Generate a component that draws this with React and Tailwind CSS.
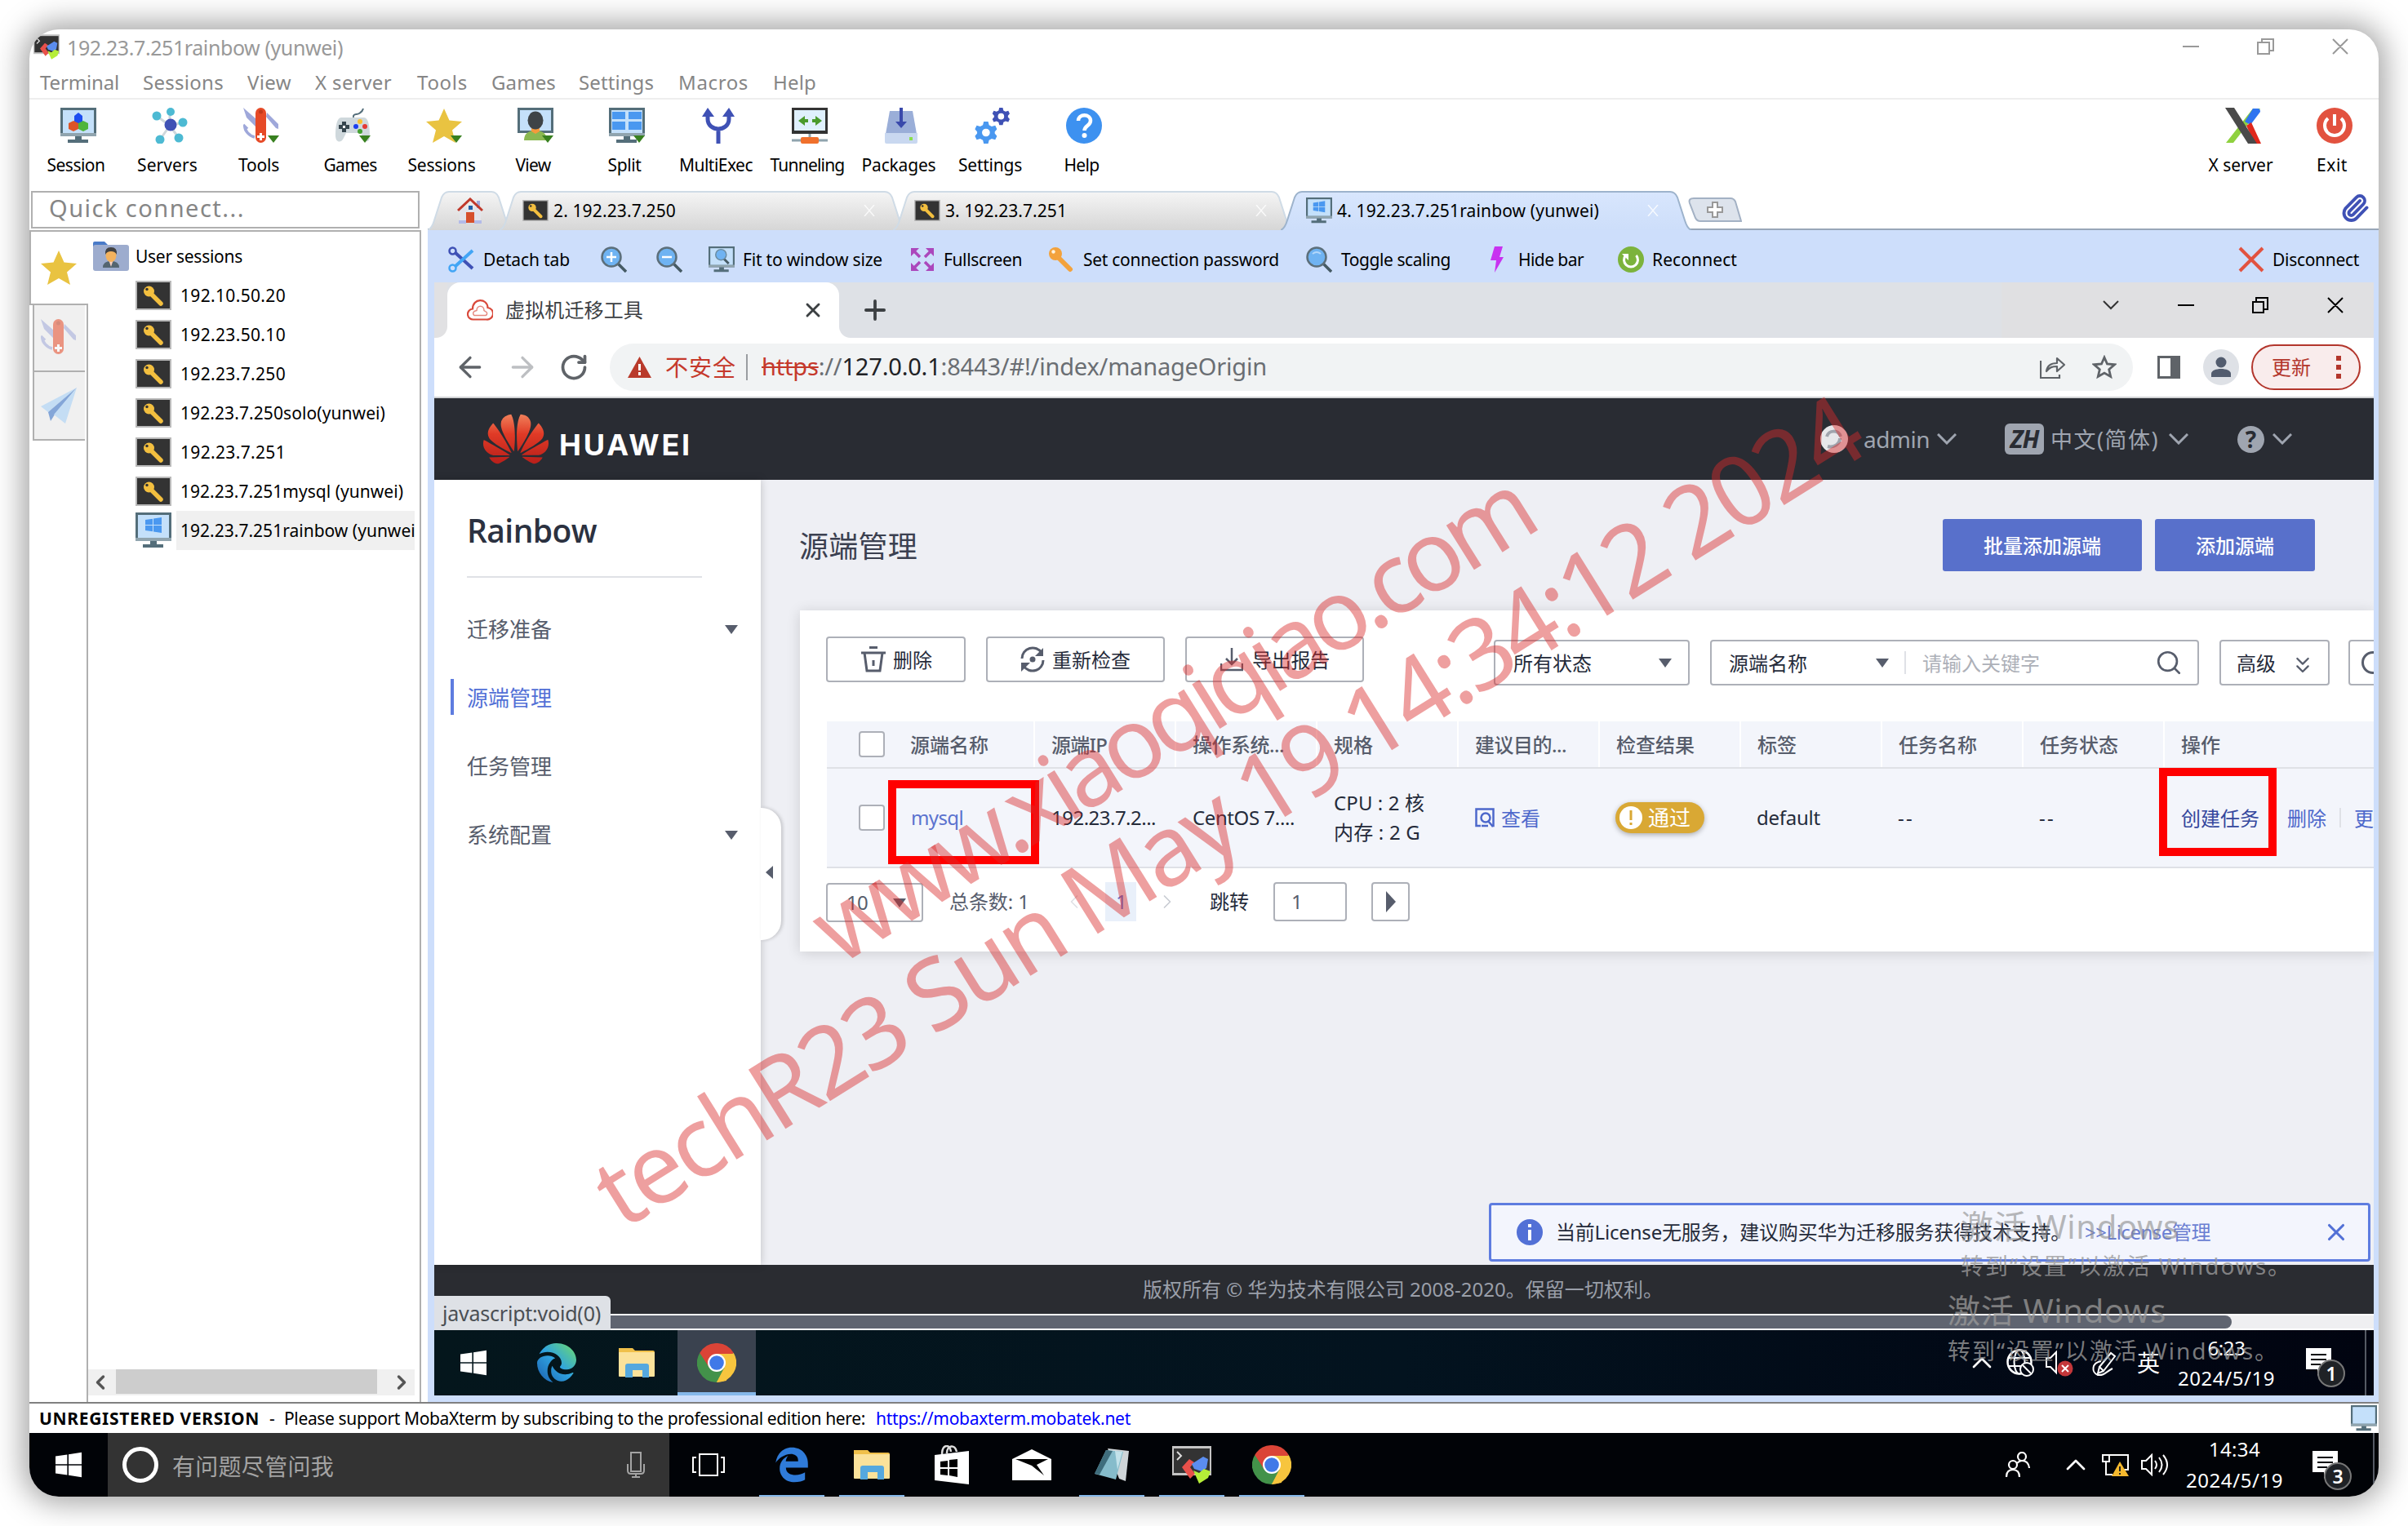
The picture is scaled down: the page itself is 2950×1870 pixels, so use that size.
import React, { useLayoutEffect, useRef } from "react";
import { ArrowLeft, ArrowRight, RotateCw, Star, Paperclip, ChevronUp, ChevronsDown, ChevronLeft, ChevronRight, Search, X, Plus } from "lucide-react";
import { FaEdge, FaEdgeLegacy } from "react-icons/fa6";
import { SiHuawei } from "react-icons/si";

/* Single line of text whose tracking is adjusted so it fills its own width. */
function T({ children, className = "" }) {
  const outer = useRef(null);
  const inner = useRef(null);
  useLayoutEffect(() => {
    const el = inner.current;
    el.style.letterSpacing = "0px";
    const diff = outer.current.clientWidth - el.getBoundingClientRect().width;
    el.style.letterSpacing = diff / el.textContent.length + "px";
  }, []);
  return (
    <span ref={outer} className={"block shrink-0 whitespace-nowrap leading-none " + className}>
      <span ref={inner} className="inline-block">{children}</span>
    </span>
  );
}

/* Rotated overlay line, tracked to a given length. */
function Stamp({ children, className = "" }) {
  const outer = useRef(null);
  const inner = useRef(null);
  useLayoutEffect(() => {
    const el = inner.current;
    el.style.letterSpacing = "0px";
    el.style.letterSpacing = (outer.current.offsetWidth - el.offsetWidth) / el.textContent.length + "px";
  }, []);
  return (
    <span ref={outer} className={"absolute block h-[120px] origin-bottom-left -rotate-32 whitespace-nowrap text-[120px] leading-none text-[#d92b2b]/45 pointer-events-none " + className}>
      <span ref={inner} className="inline-block">{children}</span>
    </span>
  );
}

const Svg = ({ className, box = "0 0 44 44", children }) => (
  <svg viewBox={box} className={"block shrink-0 " + className} fill="none">{children}</svg>
);
const GreenTri = () => <path d="M30 34h14l-7 9z" fill="#38801f" />;

/* ---------- drawings ---------- */
const Screen = ({ children }) => (
  <>
    <rect width="44" height="35" fill="#546e7a" />
    <rect y="31" width="44" height="4" fill="#90a4ae" />
    <rect x="3" y="3" width="38" height="28" fill="#c4e0fa" />
    <path d="M18 35h8v4h8v4H9v-4h9z" fill="#546e7a" />
    {children}
  </>
);
const WinPanes = ({ x = 12, y = 6, s = 1, color = "#4a98f0" }) => (
  <g transform={`translate(${x} ${y}) scale(${s})`} fill={color}>
    <path d="M0 3l9-1.3V9H0zM10 1.5L20 0v9H10zM0 10h9v7.3L0 16zM10 10h10v9l-10-1.5z" />
  </g>
);
const SessionIcon = () => (
  <Svg className="size-[44px]"><Screen>
    <path d="M17 10l5-4 5 4v8l-5 3-5-3z" fill="#1d4df0" />
    <path d="M10 19l6-3 6 3v7l-6 3-6-3z" fill="#dc5428" />
    <path d="M22 19l6-3 6 3v7l-6 3-6-3z" fill="#4fb53c" />
  </Screen></Svg>
);
const ServersIcon = () => (
  <Svg className="size-[44px]">
    <path d="M22 22L6 10M22 22V5M22 22l16-4M22 22L10 39M22 22l11 15" stroke="#cfd8dc" strokeWidth="3" />
    <circle cx="23" cy="21" r="7.5" fill="#3f51b5" />
    <g fill="#4dbad3"><circle cx="6" cy="10" r="5.5" /><circle cx="23" cy="5" r="5" /><circle cx="38" cy="18" r="5.5" /><circle cx="10" cy="39" r="5.5" /><circle cx="33" cy="37" r="5.5" /></g>
  </Svg>
);
const KnifeIcon = ({ className = "size-[44px]", tri = true }) => (
  <Svg className={className}>
    <path d="M0 0l16 14v10L4 12zM29 6l14 14v6l-3-1-12-14z" fill="#9fa8da" />
    <path d="M2 22c-1 6 6 13 12 14M0 21l5 5" stroke="#9fa8da" strokeWidth="3.5" />
    <rect x="15" width="13" height="43" rx="6.5" fill="#e64a27" />
    <circle cx="21.500" cy="5" r="2.500" fill="#c23a1c" />
    <path d="M20 31h3v3h3v3h-3v3h-3v-3h-3v-3h3z" fill="#fff" />
    {tri && <GreenTri />}
  </Svg>
);
const GamesIcon = () => (
  <Svg className="size-[44px]">
    <path d="M23 12c-1-5 4-3 7-5s4-2 5-6" stroke="#546e7a" strokeWidth="2" />
    <path d="M8 12h28c5 0 7 10 7 22 0 9-5 9-8 3l-3-6H14l-3 6c-3 7-10 6-10-3C1 22 3 12 8 12z" fill="#cfd8dc" />
    <path d="M9 17h5v4h4v5h-4v4H9v-4H5v-5h4z" fill="#37474f" /><rect x="10" y="22" width="3" height="3" fill="#fff" />
    <circle cx="31" cy="17" r="3" fill="#fbc02d" /><circle cx="26" cy="23" r="3" fill="#1d3ff0" /><circle cx="37" cy="23" r="3" fill="#e53935" /><circle cx="31" cy="29" r="3" fill="#43a030" />
    <GreenTri />
  </Svg>
);
const StarIcon = ({ className = "size-[44px]", tri }) => (
  <Svg className={className}>
    <path d="M22 1l6.500 14.500L44 17 32 27.500l4 15.500-14-8-14 8 4-15.500L0 17l15.500-1.500z" fill="#e9c341" />
    {tri && <GreenTri />}
  </Svg>
);
const ViewIcon = () => (
  <Svg className="size-[44px]"><rect width="44" height="31" fill="#546e7a" /><rect x="3" y="3" width="38" height="25" fill="#c4e0fa" />
    <path d="M8 40c0-9 6-12 14-12s14 3 14 12z" fill="#8bb851" /><path d="M17 24h10v5l-5 3-5-3z" fill="#f59a3c" /><ellipse cx="22" cy="15.500" rx="9.500" ry="11" fill="#3e4347" /><GreenTri />
  </Svg>
);
const SplitIcon = () => (
  <Svg className="size-[44px]"><Screen><path d="M4 5h16v9H4zM24 5h16v9H24zM4 17h16v10H4zM24 17h16v10H24z" fill="#4a98f0" /></Screen><GreenTri /></Svg>
);
const MultiIcon = () => (
  <Svg className="size-[44px]"><path d="M22 44V27M9 8v6c0 8 7 12 13 12s13-4 13-12V8" stroke="#3f51b5" strokeWidth="5" /><path d="M2 11L9 0l8 11zM27 11L35 0l7 11z" fill="#3f51b5" /></Svg>
);
const TunnelIcon = () => (
  <Svg className="size-[44px]"><rect width="44" height="32" fill="#333" /><rect x="3" y="3" width="38" height="25" fill="#dff0fd" /><path d="M8 16l8-6v4h4v4h-4v4zM37 16l-8-6v4h-4v4h4v4z" fill="#4a9a2c" /><path d="M22 32v8M0 40h44" stroke="#90a4ae" strokeWidth="3" /><rect x="11" y="36" width="22" height="8" rx="2" fill="#f0702c" /></Svg>
);
const PackIcon = () => (
  <Svg className="size-[44px]"><path d="M8 4h28l5 28H3z" fill="#9aaed8" /><path d="M2 31h40v11q0 2-2 2H4q-2 0-2-2z" fill="#c9d8f0" /><rect x="32" y="36" width="4" height="4" fill="#8ae04c" /><path d="M20 0h4v17h5l-7 8-7-8h5z" fill="#3949ab" /></Svg>
);
const gear = "M8.500 0h5l1 4 3 1.500 4-1 2 4-2.500 3v2l2.500 3-2 4-4-1-3 1.500-1 4h-5l-1-4-3-1.500-4 1-2-4 2.500-3v-2l-2.500-3 2-4 4 1 3-1.500zM11 8a4.500 4.500 0 100 9 4.500 4.500 0 000-9z";
const GearsIcon = () => (
  <Svg className="size-[44px]"><g transform="translate(2 17) scale(1.080)"><path fillRule="evenodd" d={gear} fill="#4a98f0" /></g><g transform="translate(23 0) scale(.85)"><path fillRule="evenodd" d={gear} fill="#3f51b5" /></g></Svg>
);
const HelpIcon = () => (
  <Svg className="size-[44px]"><circle cx="22" cy="22" r="22" fill="#3d91f0" /><path d="M15 16c0-9 15-9 15 0 0 6-7.500 6-7.500 12" stroke="#fff" strokeWidth="4.500" /><circle cx="22.500" cy="34" r="3" fill="#fff" /></Svg>
);
const XIcon = () => (
  <Svg className="size-[44px]"><path d="M34 1h9L10 43H1z" fill="#8fd13f" /><path d="M34 1h6q3 0 3 4L31 21l-7-4z" fill="#2f74f0" /><path d="M26 22l6-4 12 26h-8z" fill="#e0281c" /><path d="M0 0h11l28 44H28z" fill="#4a4a4a" /></Svg>
);
const PowerIcon = () => (
  <Svg className="size-[44px]"><circle cx="22" cy="22" r="22" fill="#e2523f" /><path d="M14 13a12 12 0 1016 0" stroke="#fff" strokeWidth="4" /><path d="M22 8v14" stroke="#fff" strokeWidth="4" /></Svg>
);
const KeyIcon = ({ className }) => (
  <Svg className={className} box="0 0 44 36"><rect width="44" height="36" fill="#b9b9b9" /><rect x="2" y="2" width="40" height="32" fill="#333" /><circle cx="16.500" cy="13" r="6.500" fill="#f3bf3f" /><path d="M19 16l12 12" stroke="#f3bf3f" strokeWidth="5.500" strokeLinecap="round" /><circle cx="14" cy="10.500" r="1.700" fill="#333" /></Svg>
);
const MonitorWin = ({ className }) => <Svg className={className}><Screen><WinPanes /></Screen></Svg>;
const MobaIcon = ({ className }) => (
  <Svg className={className} box="0 0 48 46"><rect width="48" height="36" fill="#c4c4c4" /><rect x="2" y="3" width="44" height="30" fill="#333" /><path d="M6 7l5 5-5 5" stroke="#ddd" strokeWidth="2" /><path d="M12 26l9-10 6 4-5 6 6 8-6 6z" fill="#e8504a" /><path d="M24 22l14-9 6 3-2 11-6 4-9-3z" fill="#5b8def" /><path d="M26 30l7 3 6-5 8 3-3 8-11 7z" fill="#b5ee38" /></Svg>
);
const ChromeIcon = () => (
  <Svg className="size-[48px]" box="0 0 48 48"><path d="M24 24L3.200 12a24 24 0 0141.600 0z" fill="#db4437" /><path d="M24 24h0L44.800 12A24 24 0 0124 48z" fill="#f7c53e" /><path d="M24 24L24 48A24 24 0 013.200 12z" fill="#43924a" /><path d="M24 13h21.300L33 30z" fill="#f7c53e" /><path d="M14.500 29.500L3.200 12l11 0L24 13z" fill="#db4437" /><path d="M14.500 29.500L3.200 12 10 24z" fill="#43924a" /><path d="M14 30l20 0L24 48z" fill="#43924a" /><path d="M33.500 29.500L24 48l12-2z" fill="#f7c53e" /><circle cx="24" cy="24" r="11" fill="#fff" /><circle cx="24" cy="24" r="8.800" fill="#4079e8" /></Svg>
);
const FolderIcon = ({ className }) => (
  <Svg className={className} box="0 0 44 36"><path d="M0 0h17l3 3h22q2 0 2 2v29H0z" fill="#f0c04a" /><path d="M0 5h44v29q0 1-1 1H1q-1 0-1-1z" fill="#fbe29a" /><path d="M8 36V22q0-3 3-3h23q3 0 3 3v14h-8v-9H17v9z" fill="#55a8de" /></Svg>
);
const WinLogo = () => <Svg className="size-[32px]" box="0 0 20 19"><WinPanes x={0} y={0} color="#fff" /></Svg>;
const Lens = ({ sign }) => (
  <Svg className="size-[32px]" box="0 0 32 32"><path d="M21 21l10 10" stroke="#455a64" strokeWidth="3.500" /><circle cx="13" cy="13" r="11.500" fill="#6fb3f2" stroke="#5c6f7b" strokeWidth="2.500" />{sign === "+" && <path d="M13 7v12M7 13h12" stroke="#fff" strokeWidth="2.500" />}{sign === "-" && <path d="M7 13h12" stroke="#fff" strokeWidth="2.500" />}{!sign && <path d="M8 9q5-4 10 0" stroke="#b4d8fa" strokeWidth="2" />}</Svg>
);
const Down = ({ className = "" }) => <Svg className={"w-[16px] h-[11px] " + className} box="0 0 16 11"><path d="M0 0h16L8 11z" fill="#575d6c" /></Svg>;
const WinBtns = ({ className, w }) => (
  <Svg className={"h-[20px] w-[204px] " + className} box="0 0 204 20">
    <path d={w ? "M0 10h20M92 5h14v14H92zM97 5V1h14v14h-5M184 1l18 18M202 1l-18 18" : "M0 10h20M92 6h13v13H92zM96 6V1h14v14h-5M184 1l18 18M202 1l-18 18"} stroke="currentColor" strokeWidth="2" />
  </Svg>
);
const Notif = ({ n, className = "" }) => (
  <div className={"relative h-[50px] w-[48px] shrink-0 " + className}>
    <Svg className="h-[34px] w-[31px]" box="0 0 31 34"><path d="M0 0h31v26H20l-6 8v-8H0z" fill="#fff" /><path d="M6 8h19M6 14h19M6 20h12" stroke="#05080f" strokeWidth="2" /></Svg>
    <span className="absolute left-[14px] top-[14px] flex size-[34px] items-center justify-center rounded-full border-2 border-[#777] bg-[#1f2226] text-[23px] font-semibold leading-none text-white">{n}</span>
  </div>
);

/* ---------- MobaXterm chrome ---------- */
const menus = [
  ["Terminal", "ml-[13px] w-[97px]"], ["Sessions", "ml-[29px] w-[99px]"], ["View", "ml-[29px] w-[54px]"], ["X server", "ml-[29px] w-[94px]"], ["Tools", "ml-[31px] w-[62px]"],
  ["Games", "ml-[29px] w-[79px]"], ["Settings", "ml-[28px] w-[92px]"], ["Macros", "ml-[30px] w-[86px]"], ["Help", "ml-[30px] w-[53px]"],
];
const tools = [
  ["Session", "w-[71px]", <SessionIcon />], ["Servers", "w-[74px]", <ServersIcon />], ["Tools", "w-[50px]", <KnifeIcon />], ["Games", "w-[65px]", <GamesIcon />],
  ["Sessions", "w-[83px]", <StarIcon tri />], ["View", "w-[43px]", <ViewIcon />], ["Split", "w-[41px]", <SplitIcon />], ["MultiExec", "w-[90px]", <MultiIcon />],
  ["Tunneling", "w-[91px]", <TunnelIcon />], ["Packages", "w-[91px]", <PackIcon />], ["Settings", "w-[78px]", <GearsIcon />], ["Help", "w-[43px]", <HelpIcon />],
];
const Tool = ({ label, w, icon }) => (
  <div className="flex w-[112px] shrink-0 flex-col items-center">
    {icon}
    <T className={"mr-[6px] mt-[16px] text-[21px] text-black " + w}>{label}</T>
  </div>
);

const TabShape = ({ w, active, children, className = "" }) => (
  <div className={"relative flex h-[48px] shrink-0 items-center " + className}>
    <svg className="absolute inset-0 h-full w-full" viewBox={`0 0 ${w} 48`} fill="none" preserveAspectRatio="none">
      <defs>
        <linearGradient id="tabg" x1="0" y1="0" x2="0" y2="1"><stop stopColor="#f5f5f5" /><stop offset="1" stopColor="#d6d6d6" /></linearGradient>
        <linearGradient id="taba" x1="0" y1="0" x2="0" y2="1"><stop stopColor="#d8e6fd" /><stop offset="1" stopColor="#cddefa" /></linearGradient>
      </defs>
      <path d={`M0 48Q5 46 8 36L17 8Q20 1 26 1H${w - 26}Q${w - 20} 1 ${w - 17} 8L${w - 8} 36Q${w - 5} 46 ${w} 48`} fill={active ? "url(#taba)" : "url(#tabg)"} stroke={active ? "#9db3cc" : "#cfdbe6"} strokeWidth="2" />
    </svg>
    <div className="relative flex items-center">{children}</div>
  </div>
);
const GhostX = ({ className }) => <Svg className={"size-[14px] " + className} box="0 0 14 14"><path d="M1 0l12 14M13 0L1 14" stroke="#fff" strokeOpacity=".8" strokeWidth="1.500" /></Svg>;

const sessions = [
  ["192.10.50.20", "w-[129px]"], ["192.23.50.10", "w-[129px]"], ["192.23.7.250", "w-[129px]"], ["192.23.7.250solo(yunwei)", "w-[251px]"], ["192.23.7.251", "w-[129px]"], ["192.23.7.251mysql (yunwei)", "w-[273px]"],
];

function Sidebar() {
  return (
    <div className="flex w-[488px] shrink-0 flex-col">
      <div className="ml-[2px] flex h-[46px] w-[476px] items-center border-2 border-[#b0b0b0]">
        <T className="ml-[20px] w-[240px] pb-[5px] text-[29px] text-[#868686]">Quick connect...</T>
      </div>
      <div className="mt-[2px] flex h-[1436px] w-[480px] border-r-2 border-t-2 border-[#b0b0b0]">
        <div className="flex w-[72px] shrink-0 flex-col">
          <div className="flex h-[90px] items-center border-b-2 border-l-2 border-[#b0b0b0] pl-[12px]"><StarIcon className="size-[44px]" /></div>
          <div className="flex flex-1 flex-col border-r-2 border-[#b0b0b0] pl-[4px]">
            <div className="flex h-[82px] w-[64px] items-center border-b-2 border-l-2 border-[#b0b0b0] bg-[#f0f0f0] pb-[2px] pl-[8px]"><KnifeIcon className="size-[44px] opacity-55" tri={false} /></div>
            <div className="flex h-[84px] w-[64px] items-center border-b-2 border-l-2 border-[#b0b0b0] bg-[#f0f0f0] pl-[8px]">
              <Svg className="size-[44px]"><path d="M44 0L0 23l9 7z" fill="#c4ddf4" /><path d="M44 0L9 30l3 11 5-8z" fill="#84a6d8" /><path d="M44 0L16 33l14 11z" fill="#c4ddf4" /></Svg>
            </div>
          </div>
        </div>
        <div className="flex w-[400px] flex-col">
          <div className="mt-[12px] flex h-[36px] items-center">
            <Svg className="ml-[6px] h-[36px] w-[44px]" box="0 0 44 36"><path d="M0 6V2q0-2 2-2h12l5 5v6H0z" fill="#4a7bc8" /><rect y="4" width="44" height="32" rx="3" fill="#9dacce" /><path d="M12 32q0-8 10-8t10 8z" fill="#546570" /><path d="M19 22h6l-3 9z" fill="#f6d0c0" /><ellipse cx="22" cy="17" rx="6.500" ry="8" fill="#f3b25e" /><path d="M15 16q-1-9 7-9t7 9q-2-4-7-4t-7 4z" fill="#424242" /></Svg>
            <T className="ml-[8px] w-[131px] text-[21px]">User sessions</T>
          </div>
          <div className="mt-[6px] flex flex-col">
            {sessions.map(([s, w]) => (
              <div key={s} className="flex h-[48px] items-center">
                <KeyIcon className="ml-[58px] h-[36px] w-[44px]" />
                <T className={"ml-[11px] text-[21px] " + w}>{s}</T>
              </div>
            ))}
            <div className="flex h-[48px] items-center">
              <MonitorWin className="ml-[58px] size-[44px]" />
              <div className="ml-[6px] flex h-[48px] w-[292px] items-center overflow-hidden bg-[#f0f0f0]"><T className="ml-[5px] w-[294px] text-[21px]">192.23.7.251rainbow (yunwei)</T></div>
            </div>
          </div>
          <div className="mt-auto mb-[8px] flex h-[32px] w-[400px] items-center bg-[#f0f0f0] text-[#555]">
            <ChevronLeft className="ml-[1px] size-[28px]" strokeWidth={3} />
            <div className="ml-[5px] h-[30px] w-[320px] self-start bg-[#cdcdcd]" />
            <ChevronRight className="ml-[16px] size-[28px]" strokeWidth={3} />
          </div>
        </div>
      </div>
    </div>
  );
}

/* ---------- remote page ---------- */
const heads = [
  ["源端IP", "w-[68px]"], ["操作系统...", "w-[112px]"], ["规格", "w-[48px]"], ["建议目的...", "w-[112px]"], ["检查结果", "w-[96px]"], ["标签", "w-[48px]"], ["任务名称", "w-[96px]"], ["任务状态", "w-[96px]"],
];
const Btn = ({ icon, label, className, w }) => (
  <div className={"flex h-[56px] shrink-0 items-center rounded-[4px] border-2 border-[#adb0b8] bg-white text-[#252b3a] " + className}>
    {icon}<T className={"pt-[2px] text-[24px] " + w}>{label}</T>
  </div>
);
const Check = ({ className = "" }) => <div className={"size-[32px] shrink-0 rounded-[4px] border-2 border-[#adb0b8] bg-white " + className} />;
const navs = [["迁移准备", 1], ["源端管理", 0, 1], ["任务管理", 0], ["系统配置", 1]];

function Card() {
  return (
    <div className="ml-[48px] mt-[48px] flex h-[418px] w-[1928px] flex-col overflow-hidden bg-white shadow-[0_2px_16px_rgba(0,0,0,0.14)]">
      <div className="ml-[32px] mt-[32px] flex h-[60px] items-start">
        <Btn className="w-[171px]" w="ml-[8px] w-[48px]" label="删除" icon={<Svg className="ml-[40px] h-[32px] w-[32px]" box="0 0 32 32"><path d="M11 1.500h10M1 8h30M5 8l3 22h16l3-22" stroke="#575d6c" strokeWidth="3" /><path d="M16 17v7" stroke="#575d6c" strokeWidth="3" /></Svg>} />
        <Btn className="ml-[25px] w-[219px]" w="ml-[8px] w-[96px]" label="重新检查" icon={<Svg className="ml-[39px] h-[32px] w-[32px]" box="0 0 32 32"><path d="M3 15A13 13 0 0127 8M29 17A13 13 0 015 24" stroke="#575d6c" strokeWidth="3" /><path d="M29 2v10H19zM2 31V20h11z" fill="#575d6c" /><circle cx="16" cy="16" r="3.500" fill="#575d6c" /></Svg>} />
        <Btn className="ml-[25px] w-[219px]" w="ml-[11px] w-[95px]" label="导出报告" icon={<Svg className="ml-[41px] h-[30px] w-[28px]" box="0 0 28 30"><path d="M14 1v20M7 14l7 7 7-7M1 20v8h26v-8" stroke="#575d6c" strokeWidth="2.500" /></Svg>} />
        <div className="ml-[159px] mt-[4px] flex h-[56px] w-[240px] shrink-0 items-center rounded-[4px] border-2 border-[#adb0b8] text-[#252b3a]"><T className="ml-[22px] w-[96px] pt-[2px] text-[24px]">所有状态</T><Down className="ml-[82px]" /></div>
        <div className="ml-[25px] mt-[4px] flex h-[56px] w-[599px] shrink-0 items-center rounded-[4px] border-2 border-[#adb0b8] text-[#252b3a]">
          <T className="ml-[21px] w-[96px] pt-[2px] text-[24px]">源端名称</T><Down className="ml-[84px]" />
          <div className="ml-[19px] h-[28px] w-[2px] bg-[#dfe1e6]" /><T className="ml-[20px] w-[144px] pt-[2px] text-[24px] text-[#adb0b8]">请输入关键字</T>
          <Search className="ml-[141px] size-[34px] shrink-0 text-[#575d6c]" strokeWidth={1.9} />
        </div>
        <div className="ml-[25px] mt-[4px] flex h-[56px] w-[135px] shrink-0 items-center rounded-[4px] border-2 border-[#adb0b8] text-[#252b3a]"><T className="ml-[19px] w-[48px] pt-[2px] text-[24px]">高级</T><ChevronsDown className="ml-[17px] mt-[6px] size-[32px] text-[#575d6c]" strokeWidth={1.7} /></div>
        <div className="ml-[23px] mt-[4px] flex h-[56px] w-[60px] shrink-0 items-center rounded-[4px] border-2 border-[#adb0b8]"><div className="ml-[14px] size-[28px] rounded-full border-[3px] border-[#575d6c]" /></div>
      </div>
      <div className="ml-[33px] mt-[44px] flex h-[58px] border-b-2 border-[#dfe1e6] bg-[#f3f5fb] text-[24px] font-medium text-[#575d6c]">
        <div className="flex w-[255px] shrink-0 items-center border-r-2 border-white"><Check className="ml-[39px]" /><T className="ml-[31px] w-[96px] pt-[2px]">源端名称</T></div>
        {heads.map(([h, w]) => <div key={h} className="flex w-[173px] shrink-0 items-center border-r-2 border-white"><T className={"ml-[20px] pt-[2px] " + w}>{h}</T></div>)}
        <div className="flex items-center"><T className="ml-[20px] w-[48px] pt-[2px]">操作</T></div>
      </div>
      <div className="ml-[33px] flex h-[122px] items-center border-b-2 border-[#dfe1e6] bg-[#f3f5fb] text-[24px] text-[#252b3a]">
        <div className="flex w-[275px] shrink-0 items-center"><Check className="ml-[39px]" /><T className="ml-[32px] w-[64px] text-[#5b73cf]">mysql</T></div>
        <div className="w-[173px] shrink-0"><T className="w-[128px]">192.23.7.2...</T></div>
        <div className="w-[173px] shrink-0"><T className="w-[125px]">CentOS 7....</T></div>
        <div className="flex w-[173px] shrink-0 flex-col gap-[12px]"><T className="w-[111px]">CPU : 2 核</T><T className="w-[106px]">内存 : 2 G</T></div>
        <div className="flex w-[172px] shrink-0 items-center text-[#4d68cb]">
          <Svg className="size-[24px]" box="0 0 24 24"><path d="M7 22H1.500V1.500h21V22h-2" stroke="#4d68cb" strokeWidth="2.500" /><circle cx="13" cy="12" r="5.500" stroke="#4d68cb" strokeWidth="2.500" /><path d="M16 16l6 7M8 22h8" stroke="#4d68cb" strokeWidth="2.500" /></Svg>
          <T className="ml-[8px] w-[48px] pt-[2px]">查看</T>
        </div>
        <div className="w-[173px] shrink-0">
          <div className="flex h-[38px] w-[109px] items-center rounded-full bg-[#d9a834] shadow-[0_2px_6px_rgba(0,0,0,0.3)]">
            <Svg className="ml-[5px] size-[28px]" box="0 0 28 28"><circle cx="14" cy="14" r="14" fill="#fff" /><path d="M14 5v12M14 20v3" stroke="#d9a834" strokeWidth="3" /></Svg>
            <T className="ml-[7px] w-[52px] text-[26px] text-white">通过</T>
          </div>
        </div>
        <div className="w-[173px] shrink-0"><T className="w-[78px]">default</T></div>
        <div className="w-[173px] shrink-0"><T className="w-[20px]">--</T></div>
        <div className="w-[174px] shrink-0"><T className="w-[20px]">--</T></div>
        <T className="w-[96px] pt-[2px] text-[#34479d]">创建任务</T>
        <T className="ml-[34px] w-[48px] pt-[2px] text-[#4d68cb]">删除</T>
        <div className="ml-[16px] h-[24px] w-[2px] shrink-0 bg-[#dfe1e6]" />
        <T className="ml-[16px] w-[48px] pt-[2px] text-[#4d68cb]">更多</T>
      </div>
      <div className="ml-[32px] mt-[16px] flex h-[50px] items-center text-[24px] text-[#575d6c]">
        <div className="mt-[2px] flex h-[48px] w-[119px] items-center rounded-[4px] border-2 border-[#adb0b8]"><T className="ml-[23px] w-[26px]">10</T><Down className="ml-[31px]" /></div>
        <T className="ml-[32px] w-[98px]">总条数: 1</T>
        <ChevronLeft className="ml-[41px] size-[28px] text-[#dfe1e6]" strokeWidth={1.5} />
        <div className="ml-[24px] flex h-[48px] w-[38px] items-center justify-center bg-[#e9f0fa] text-[#5b73cf]"><T className="w-[12px]">1</T></div>
        <ChevronRight className="ml-[24px] size-[28px] text-[#c9ccd3]" strokeWidth={1.5} />
        <T className="ml-[38px] w-[48px] text-[#252b3a]">跳转</T>
        <div className="ml-[30px] flex h-[48px] w-[90px] items-center rounded-[4px] border-2 border-[#adb0b8]"><T className="ml-[20px] w-[12px]">1</T></div>
        <div className="ml-[30px] flex h-[48px] w-[47px] items-center justify-center rounded-[4px] border-2 border-[#adb0b8]"><Svg className="h-[26px] w-[12px]" box="0 0 12 26"><path d="M0 0l12 13L0 26z" fill="#575d6c" /></Svg></div>
      </div>
    </div>
  );
}

function Browser() {
  return (
    <div className="relative ml-[8px] flex h-[1364px] w-[2376px] flex-col overflow-hidden bg-white">
      <div className="flex h-[68px] bg-[#dee1e6]">
        <div className="w-[16px] bg-white"><div className="h-full rounded-br-[14px] bg-[#e1e1e3]" /></div>
        <div className="flex w-[480px] items-center rounded-t-[16px] bg-white">
          <Svg className="ml-[24px] h-[26px] w-[32px]" box="0 0 32 26"><path d="M8 24.500a6.500 6.500 0 01-1-13C7 -2 25 -2 25.500 10a7 7 0 01-1.500 14.500z" stroke="#d9493b" strokeWidth="2.200" /><path d="M9 19.500a3 3 0 010-5l3-1c0-7 9-7 9 0l3 2a2.500 2.500 0 01-1 4z" stroke="#e58a80" strokeWidth="1.500" /></Svg>
          <T className="ml-[15px] w-[169px] text-[24px] text-[#3c4043]">虚拟机迁移工具</T>
          <X className="ml-[194px] size-[28px] text-[#3c4043]" strokeWidth={2.5} />
        </div>
        <div className="w-[16px] bg-white"><div className="h-full rounded-bl-[14px] bg-[#dee1e6]" /></div>
        <Plus className="ml-[9px] mt-[15px] size-[38px] text-[#3c4043]" strokeWidth={2.4} />
        <div className="ml-auto flex w-[456px] bg-[#e0e0e2]">
          <Svg className="ml-[124px] mt-[22px] h-[12px] w-[20px]" box="0 0 20 12"><path d="M1 1l9 9 9-9" stroke="#333" strokeWidth="2" /></Svg>
          <WinBtns className="ml-[72px] mt-[18px] text-black" />
        </div>
      </div>
      <div className="flex h-[74px] items-center border-b-2 border-[#d2d3d5] bg-white">
        <ArrowLeft className="ml-[24px] size-[40px] text-[#5f6368]" />
        <ArrowRight className="ml-[24px] size-[40px] text-[#bdbfc2]" />
        <RotateCw className="ml-[25px] size-[36px] text-[#5f6368]" strokeWidth={2.5} />
        <div className="ml-[26px] flex h-[58px] w-[1866px] items-center rounded-full bg-[#f1f3f4]">
          <Svg className="ml-[22px] h-[26px] w-[29px]" box="0 0 29 26"><path d="M14.500 0L29 26H0z" fill="#b93a2b" /><path d="M14.500 9v8M14.500 19v4" stroke="#fff" strokeWidth="3" /></Svg>
          <T className="ml-[17px] w-[87px] text-[28px] text-[#c5392b]">不安全</T>
          <div className="ml-[12px] h-[32px] w-[2px] bg-[#9a9da1]" />
          <T className="ml-[17px] w-[619px] pb-[4px] text-[29px] text-[#6a6e73]"><span className="text-[#c5392b] line-through decoration-2">https</span>://<span className="text-[#202124]">127.0.0.1</span>:8443/#!/index/manageOrigin</T>
          <Svg className="ml-[947px] h-[28px] w-[32px]" box="0 0 32 28"><path d="M1 6v21h23v-4" stroke="#5f6368" strokeWidth="2.200" /><path d="M8 19c1-8 6-10 13-10V3l9 8-9 8v-6c-6 0-9 1-13 6z" stroke="#5f6368" strokeWidth="2.200" strokeLinejoin="round" /></Svg>
          <Svg className="ml-[32px] size-[30px]" box="0 0 30 30"><path d="M15 3l3.500 8 9 .8-6.800 6 2 8.700L15 22l-7.700 4.500 2-8.700-6.800-6 9-.8z" stroke="#5f6368" strokeWidth="2.800" /></Svg>
        </div>
        <div className="ml-[30px] h-[28px] w-[28px] border-[3px] border-r-[12px] border-[#5f6368]" />
        <Svg className="ml-[28px] size-[44px]"><circle cx="22" cy="22" r="22" fill="#dee1e6" /><circle cx="22" cy="16" r="6.500" fill="#525c6e" /><path d="M10 34v-4c0-8 24-8 24 0v4z" fill="#525c6e" /></Svg>
        <div className="ml-[15px] flex h-[56px] w-[134px] items-center rounded-full border-2 border-[#b3362c] bg-[#f9ecec]">
          <T className="ml-[23px] w-[48px] text-[24px] text-[#b3362c]">更新</T>
          <Svg className="ml-[31px] h-[28px] w-[6px]" box="0 0 6 28"><path d="M0 0h6v6H0zM0 11h6v6H0zM0 22h6v6H0z" fill="#b3362c" /></Svg>
        </div>
      </div>
      <div className="flex h-[100px] shrink-0 items-center bg-[#292c33] text-[#9fa5b0]">
        <svg className="size-0"><defs><linearGradient id="petal" x1="0" y1="0" x2="0" y2="1"><stop stopColor="#f0805a" /><stop offset=".4" stopColor="#e03a26" /><stop offset="1" stopColor="#b81f1a" /></linearGradient></defs></svg>
        <SiHuawei className="ml-[60px] size-[80px]" fill="url(#petal)" />
        <T className="ml-[13px] mt-[14px] w-[163px] font-['Inter'] text-[36px] font-bold text-white">HUAWEI</T>
        <Svg className="ml-[1382px] size-[34px]" box="0 0 34 34"><circle cx="17" cy="17" r="17" fill="#e6e7ea" /><path d="M9 26c8 2 15-3 15-10M8 14c2-8 14-9 17 0" stroke="#a0a4ad" strokeWidth="4" /></Svg>
        <T className="ml-[19px] w-[81px] text-[28px]">admin</T>
        <Svg className="ml-[9px] h-[14px] w-[24px]" box="0 0 24 14"><path d="M1 1l11 11L23 1" stroke="#9fa5b0" strokeWidth="3" /></Svg>
        <div className="ml-[59px] flex h-[38px] w-[48px] items-center justify-center rounded-[6px] bg-[#9fa5b0] text-[30px] font-bold italic leading-none tracking-[-1px] text-[#292c33]">ZH</div>
        <T className="ml-[8px] w-[133px] text-[27px]">中文(简体)</T>
        <Svg className="ml-[12px] h-[14px] w-[24px]" box="0 0 24 14"><path d="M1 1l11 11L23 1" stroke="#9fa5b0" strokeWidth="3" /></Svg>
        <div className="ml-[60px] flex size-[33px] items-center justify-center rounded-full bg-[#9fa5b0] text-[28px] font-bold leading-none text-[#292c33]">?</div>
        <Svg className="ml-[10px] h-[14px] w-[24px]" box="0 0 24 14"><path d="M1 1l11 11L23 1" stroke="#9fa5b0" strokeWidth="3" /></Svg>
      </div>
      <div className="flex h-[962px] shrink-0 bg-[#eeeff4]">
        <div className="relative flex w-[400px] shrink-0 flex-col bg-white shadow-[0_0_10px_rgba(0,0,0,0.2)]">
          <T className="ml-[40px] mt-[42px] w-[159px] font-['Open_Sans'] text-[39px] font-semibold text-[#2b3140]">Rainbow</T>
          <div className="ml-[40px] mt-[37px] h-[2px] w-[288px] bg-[#dfe1e6]" />
          <div className="mt-[20px] flex flex-col">
            {navs.map(([n, open, on]) => (
              <div key={n} className="flex h-[84px] items-center">
                <div className={on ? "ml-[20px] h-[44px] w-[4px] bg-[#5e7ce0]" : "ml-[20px] h-[44px] w-[4px]"} />
                <T className={"ml-[16px] w-[104px] pt-[2px] text-[26px] " + (on ? "text-[#5270d6]" : "text-[#575d6c]")}>{n}</T>
                {open ? <Down className="ml-[212px] mt-[2px]" /> : null}
              </div>
            ))}
          </div>
          <div className="absolute left-[400px] top-[402px] flex h-[162px] w-[25px] items-center rounded-r-[24px] bg-white shadow-[2px_0_4px_rgba(0,0,0,0.18)]"><Svg className="mb-[4px] ml-[6px] h-[16px] w-[9px]" box="0 0 9 16"><path d="M9 0v16L0 8z" fill="#575d6c" /></Svg></div>
        </div>
        <div className="flex w-[1976px] flex-col">
          <div className="mt-[48px] flex h-[64px] items-center">
            <T className="ml-[47px] w-[145px] pt-[3px] text-[36px] text-[#3b4050]">源端管理</T>
            <div className="ml-[1256px] flex h-[64px] w-[244px] shrink-0 items-center justify-center rounded-[3px] bg-[#5870cb] text-[24px] font-medium text-white"><T className="w-[144px] pt-[2px]">批量添加源端</T></div>
            <div className="ml-[16px] flex h-[64px] w-[196px] shrink-0 items-center justify-center rounded-[3px] bg-[#5870cb] text-[24px] font-medium text-white"><T className="w-[96px] pt-[2px]">添加源端</T></div>
          </div>
          <Card />
        </div>
      </div>
      <div className="flex h-[60px] shrink-0 items-center bg-[#2a2c31]"><T className="ml-[868px] w-[637px] text-[24px] text-[#9a9fa9]">版权所有 © 华为技术有限公司 2008-2020。保留一切权利。</T></div>
      <div className="flex h-[20px] shrink-0 items-center border-y-2 border-white bg-[#efeff1]"><div className="h-[16px] w-[2202px] rounded-r-full bg-[#5f6470]" /></div>
      <div className="flex h-[80px] shrink-0 items-center bg-gradient-to-r from-[#04161c] via-[#03131f] to-[#010410] text-white">
        <div className="ml-[32px]"><WinLogo /></div>
        <svg className="size-0"><defs><linearGradient id="edg" x1="0" y1="1" x2="1" y2="0"><stop stopColor="#1b5fb0" /><stop offset=".5" stopColor="#2fa3e0" /><stop offset="1" stopColor="#6fdc6a" /></linearGradient></defs></svg>
        <FaEdge className="ml-[62px] size-[48px]" fill="url(#edg)" />
        <FolderIcon className="ml-[52px] h-[36px] w-[44px]" />
        <div className="ml-[28px] flex h-[80px] w-[96px] items-center justify-center border-b-4 border-[#85b8ea] bg-[#3a424f] pt-[4px]"><ChromeIcon /></div>
        <ChevronUp className="ml-[1482px] size-[40px]" strokeWidth={1.6} />
        <Svg className="ml-[10px] size-[34px]" box="0 0 34 34"><circle cx="16" cy="16" r="14.500" stroke="#fff" strokeWidth="2.500" /><ellipse cx="16" cy="16" rx="6.500" ry="14.500" stroke="#fff" strokeWidth="2" /><path d="M2 11h28M2 21h28" stroke="#fff" strokeWidth="2" /><circle cx="25" cy="25" r="8" fill="#020814" stroke="#fff" strokeWidth="2" /><path d="M20 20l10 10" stroke="#fff" strokeWidth="2" /></Svg>
        <Svg className="ml-[14px] size-[34px]" box="0 0 34 34"><path d="M1 11h5l7-7v25l-7-7H1z" stroke="#fff" strokeWidth="2" /><circle cx="24" cy="24" r="9.500" fill="#c4373a" /><path d="M20 20l8 8M28 20l-8 8" stroke="#fff" strokeWidth="2" /></Svg>
        <Svg className="ml-[22px] size-[34px]" box="0 0 34 34"><path d="M10 22L24 5l5 4-14 18zM10 22l-2 8 7-3" stroke="#fff" strokeWidth="2" /><path d="M12 15c-12 2-12 14-4 17 8 1 10-4 18-8" stroke="#fff" strokeWidth="2" /></Svg>
        <T className="ml-[22px] w-[28px] text-[28px]">英</T>
        <div className="ml-[22px] flex w-[119px] flex-col items-center gap-[13px] text-[24px]"><T className="w-[46px]">6:23</T><T className="w-[119px]">2024/5/19</T></div>
        <Notif n="1" className="ml-[38px] mt-[14px]" />
        <div className="ml-[24px] h-[80px] w-[2px] bg-[#555a64]" />
      </div>
      <div className="absolute left-0 top-[1242px] flex h-[42px] w-[216px] items-center rounded-tr-[6px] bg-[#dee1e6]"><T className="ml-[10px] w-[194px] text-[25px] text-[#4b4f54]">javascript:void(0)</T></div>
      <div className="absolute left-[1292px] top-[1128px] flex h-[72px] w-[1080px] items-center rounded-[4px] border-[3px] border-[#5e7ce0] bg-[#f3f5fd] text-[24px] text-[#252b3a]">
        <Svg className="ml-[31px] size-[32px]" box="0 0 32 32"><circle cx="16" cy="16" r="16" fill="#5270d6" /><path d="M16 6v4M16 13v13" stroke="#fff" strokeWidth="4" /></Svg>
        <T className="ml-[16px] w-[630px]">当前License无服务，建议购买华为迁移服务获得技术支持。</T>
        <T className="ml-[18px] w-[154px] text-[#6a7ed2]">&gt;&gt;License管理</T>
        <X className="ml-[137px] size-[34px] text-[#5270d6]" strokeWidth={2.2} />
      </div>
      <T className="absolute left-[1870px] top-[1137px] w-[268px] text-[40px] text-[#8a8a8a]/60">激活 Windows</T>
      <T className="absolute left-[1870px] top-[1191px] w-[406px] text-[28px] text-[#9a9a9a]/80">转到“设置”以激活 Windows。</T>
      <T className="absolute left-[1854px] top-[1240px] w-[268px] text-[40px] text-[#9a9a9a]/75">激活 Windows</T>
      <T className="absolute left-[1854px] top-[1295px] w-[406px] text-[28px] text-[#9a9a9a]/80">转到“设置”以激活 Windows。</T>
    </div>
  );
}

const Bar = ({ children, on }) => <div className={"flex h-[78px] w-[80px] shrink-0 items-center justify-center border-b-2 pt-[2px] " + (on ? "border-[#85b8ea]" : "border-transparent")}>{children}</div>;

export default function App() {
  return (
    <div className="relative h-[1870px] w-[2950px] overflow-hidden bg-white p-[36px] font-['Noto_Sans','Noto_Sans_CJK_SC',sans-serif] text-black">
      <div className="flex h-[1798px] w-[2878px] flex-col overflow-hidden rounded-[36px] bg-white shadow-[0_0_36px_8px_rgba(0,0,0,0.36)]">
        {/* title and menu */}
        <div className="flex h-[42px] shrink-0 items-center text-[#999]">
          <MobaIcon className="ml-[5px] h-[31px] w-[32px]" />
          <T className="ml-[9px] w-[338px] pt-[2px] text-[25px]">192.23.7.251rainbow (yunwei)</T>
          <WinBtns w className="ml-[2254px] text-[#999]" />
        </div>
        <div className="flex h-[44px] shrink-0 items-center border-b-2 border-[#eee] pt-[3px] text-[24px] text-[#868686]">
          {menus.map(([m, c]) => <T key={m} className={c}>{m}</T>)}
        </div>
        <div className="flex h-[112px] shrink-0 pl-[4px] pt-[10px]">
          {tools.map(([l, w, i], k) => <Tool key={k} label={l} w={w} icon={i} />)}
          <div className="ml-[1308px] flex"><Tool label="X server" w="w-[79px]" icon={<XIcon />} /><Tool label="Exit" w="w-[38px]" icon={<PowerIcon />} /></div>
        </div>
        {/* body */}
        <div className="flex h-[1484px] shrink-0">
          <Sidebar />
          <div className="flex w-[2390px] shrink-0 flex-col">
            <div className="flex h-[48px] items-start border-b-2 border-[#98a6b8]">
              <TabShape w={104} className="w-[104px]">
                <Svg className="ml-[36px] size-[32px]" box="0 0 32 32"><path d="M3 12h26v19H3z" fill="#e3e4ea" /><path d="M24 4h4v9h-4z" fill="#9fa8da" /><path d="M1 16L16 2l15 14" stroke="#c0392b" strokeWidth="3" /><rect x="11" y="18" width="10" height="13" fill="#d6502c" /><rect x="14" y="10" width="5" height="5" fill="#1f5fa8" /><path d="M2 28h9v4H2zM21 28h9v4h-9z" fill="#b3bbe8" /></Svg>
              </TabShape>
              <TabShape w={498} className="ml-[-16px] w-[498px]">
                <KeyIcon className="ml-[28px] h-[26px] w-[32px]" /><T className="ml-[6px] w-[150px] text-[21px]">2. 192.23.7.250</T><GhostX className="ml-[230px]" />
              </TabShape>
              <TabShape w={490} className="ml-[-16px] w-[490px]">
                <KeyIcon className="ml-[26px] h-[26px] w-[32px]" /><T className="ml-[6px] w-[149px] text-[21px]">3. 192.23.7.251</T><GhostX className="ml-[231px]" />
              </TabShape>
              <TabShape w={503} active className="ml-[-15px] w-[503px]">
                <MonitorWin className="ml-[31px] size-[32px]" /><T className="ml-[6px] w-[321px] text-[21px]">4. 192.23.7.251rainbow (yunwei)</T><GhostX className="ml-[59px]" />
              </TabShape>
              <Svg className="ml-[-4px] mt-[8px] h-[30px] w-[66px]" box="0 0 66 30"><path d="M7 1h45q4 0 6 4l7 24H15q-4 0-6-4L2 7q-2-6 5-6z" fill="#dde3ec" stroke="#a3b1c4" strokeWidth="2" /><path d="M30 6h6v6h6v6h-6v6h-6v-6h-6v-6h6z" fill="#fff" stroke="#999" strokeWidth="2" /></Svg>
              <Paperclip className="ml-[733px] mt-[3px] size-[36px] text-[#3f51b5]" strokeWidth={2.6} />
            </div>
            <div className="flex h-[1436px] flex-col bg-[#cddefb]">
              <div className="flex h-[64px] items-center pt-[8px] text-[21px]">
                <Svg className="ml-[25px] size-[32px]" box="0 0 32 32"><path d="M8 7l22 20" stroke="#3f51b5" strokeWidth="4" /><path d="M8 25L30 5" stroke="#42a5f5" strokeWidth="4" /><circle cx="5.500" cy="5.500" r="4" stroke="#3f51b5" strokeWidth="2.500" /><circle cx="5.500" cy="26.500" r="4" stroke="#42a5f5" strokeWidth="2.500" /></Svg>
                <T className="ml-[11px] w-[106px]">Detach tab</T>
                <div className="ml-[38px]"><Lens sign="+" /></div>
                <div className="ml-[36px]"><Lens sign="-" /></div>
                <Svg className="ml-[32px] size-[32px]"><Screen><path d="M25 20l9 9" stroke="#455a64" strokeWidth="4" /><circle cx="21" cy="14" r="9" fill="#6fb3f2" stroke="#6b8ba0" strokeWidth="2" /></Screen></Svg>
                <T className="ml-[10px] w-[171px]">Fit to window size</T>
                <Svg className="ml-[35px] h-[28px] w-[28px]" box="0 0 28 28"><path d="M0 0h10L0 10zM28 0v10L18 0zM0 28V18l10 10zM28 28H18l10-10z" fill="#ab47bc" /><path d="M3 3l8 8M25 3l-8 8M3 25l8-8M25 25l-8-8" stroke="#ab47bc" strokeWidth="3.500" /></Svg>
                <T className="ml-[12px] w-[96px]">Fullscreen</T>
                <Svg className="ml-[32px] size-[32px]" box="0 0 32 32"><circle cx="9" cy="9" r="8" fill="#f3a23c" /><path d="M12 13l15 15" stroke="#f3a23c" strokeWidth="6" strokeLinecap="round" /><circle cx="6.500" cy="6.500" r="2.200" fill="#fff3dc" /></Svg>
                <T className="ml-[11px] w-[240px]">Set connection password</T>
                <div className="ml-[33px]"><Lens /></div>
                <T className="ml-[11px] w-[134px]">Toggle scaling</T>
                <Svg className="ml-[49px] h-[32px] w-[16px]" box="0 0 16 32"><path d="M5 0h10l-4 13h5L5 32l2-15H0z" fill="#c832f0" /></Svg>
                <T className="ml-[18px] w-[80px]">Hide bar</T>
                <Svg className="ml-[42px] size-[32px]" box="0 0 32 32"><circle cx="16" cy="16" r="16" fill="#7cb33c" /><path d="M9.500 11a8.500 8.500 0 1013 0" stroke="#fff" strokeWidth="3" /><path d="M5 9h8v8z" fill="#fff" /></Svg>
                <T className="ml-[10px] w-[104px]">Reconnect</T>
                <Svg className="ml-[614px] size-[32px]" box="0 0 32 32"><path d="M2 2l28 28M30 2L2 30" stroke="#e2523f" strokeWidth="4" /></Svg>
                <T className="ml-[10px] w-[106px]">Disconnect</T>
              </div>
              <Browser />
            </div>
          </div>
        </div>
        {/* status line */}
        <div className="flex h-[38px] shrink-0 items-center border-t-2 border-[#808080] bg-white text-[21px]">
          <T className="ml-[12px] w-[270px] font-bold">UNREGISTERED VERSION</T>
          <T className="ml-[12px] w-[9px]">-</T>
          <T className="ml-[9px] w-[712px]">Please support MobaXterm by subscribing to the professional edition here:</T>
          <T className="ml-[13px] w-[312px] text-[#0000ff]">https://mobaxterm.mobatek.net</T>
          <Svg className="ml-[1495px] size-[32px]"><Screen /></Svg>
        </div>
        {/* host taskbar */}
        <div className="flex h-[78px] shrink-0 items-center bg-[#010307] text-white">
          <div className="flex h-full w-[96px] items-center justify-center"><WinLogo /></div>
          <div className="flex h-full w-[688px] items-center bg-[#333]">
            <div className="ml-[18px] size-[44px] rounded-full border-[5px] border-white" />
            <T className="ml-[17px] w-[198px] pt-[4px] text-[28px] text-[#a3a3a3]">有问题尽管问我</T>
            <Svg className="ml-[359px] h-[32px] w-[22px]" box="0 0 22 32"><rect x="5" y="1" width="12" height="23" stroke="#a3a3a3" strokeWidth="2" /><path d="M1 15v8q0 4 4 4h12q4 0 4-4v-8M11 27v4M6 31h10" stroke="#a3a3a3" strokeWidth="2" /></Svg>
          </div>
          <Svg className="ml-[28px] h-[28px] w-[40px]" box="0 0 40 28"><path d="M9 1h22v26H9zM5 5H1v18h4M35 5h4v18h-4" stroke="#fff" strokeWidth="2" /></Svg>
          <div className="ml-[42px] flex gap-[18px]">
            <Bar on><FaEdgeLegacy className="size-[44px] text-[#2f7bd9]" /></Bar>
            <Bar on><FolderIcon className="h-[36px] w-[44px]" /></Bar>
            <Bar><Svg className="h-[48px] w-[42px]" box="0 0 42 48"><path d="M9 12C9-2 19-2 20 8M15 10c0-10 10-12 12-2" stroke="#ddd" strokeWidth="2.500" /><path d="M0 12l42-5v41L0 43z" fill="#fff" /><path d="M7 20l9-1v8H7zM18 18l10-1v10H18zM7 29h9v8l-9-1zM18 29h10v10l-10-2z" fill="#000" /></Svg></Bar>
            <Bar><Svg className="h-[38px] w-[48px]" box="0 0 48 38"><path d="M0 12L24 0l24 12v26H0z" fill="#fff" /><path d="M4 12h40L30 19l9 13-15-12z" fill="#000" /></Svg></Bar>
            <Bar on><Svg className="h-[42px] w-[44px]" box="0 0 44 42"><path d="M17 1l26 3-4 37-8-3z" fill="#cfd5d8" /><path d="M15 3l21 2-9 34L1 32z" fill="#86bccb" /><path d="M15 3l8 1L7 33l-6-1z" fill="#3f6d7c" /><path d="M26 4l9 1-6 22z" fill="#c3e2ea" /></Svg></Bar>
            <Bar on><MobaIcon className="h-[46px] w-[48px]" /></Bar>
            <Bar on><ChromeIcon /></Bar>
          </div>
          <Svg className="ml-[859px] h-[32px] w-[30px]" box="0 0 30 32"><circle cx="20" cy="6" r="5" stroke="#fff" strokeWidth="2.200" /><circle cx="9" cy="16" r="5" stroke="#fff" strokeWidth="2.200" /><path d="M1 31q0-9 8-9t8 9M14 14q3-3 6-3 8 0 9 9" stroke="#fff" strokeWidth="2.200" /></Svg>
          <ChevronUp className="ml-[36px] size-[40px]" strokeWidth={1.6} />
          <Svg className="ml-[12px] h-[32px] w-[34px]" box="0 0 34 32"><path d="M10 4h22v18H18M1 4h8v8H1zM5 12v16h8" stroke="#fff" strokeWidth="2" /><path d="M22 12l11 18H12z" fill="#f5b92e" /><path d="M22 18v6M22 26v2" stroke="#222" strokeWidth="2" /></Svg>
          <Svg className="ml-[14px] h-[28px] w-[34px]" box="0 0 34 28"><path d="M1 9h5l7-7v24l-7-7H1zM17 9q4 5 0 10M22 5q7 9 0 18M27 2q10 12 0 24" stroke="#fff" strokeWidth="2" /></Svg>
          <div className="ml-[21px] flex w-[119px] flex-col items-center gap-[14px] text-[24px]"><T className="w-[63px]">14:34</T><T className="w-[119px]">2024/5/19</T></div>
          <Notif n="3" className="ml-[36px] mt-[16px]" />
          <div className="ml-[26px] h-[78px] w-[2px] bg-[#555a64]" />
        </div>
      </div>
      {/* annotation boxes and stamp */}
      <div className="absolute left-[1088px] top-[956px] h-[103px] w-[185px] border-[10px] border-[#ff0000]" />
      <div className="absolute left-[2645px] top-[941px] h-[108px] w-[144px] border-[10px] border-[#ff0000]" />
      <Stamp className="left-[1036px] top-[1076px] w-[1010px]">www.xiaoqiqiao.com</Stamp>
      <Stamp className="left-[770px] top-[1400px] w-[1800px]">techR23 Sun May 19 14:34:12 2024</Stamp>
    </div>
  );
}
